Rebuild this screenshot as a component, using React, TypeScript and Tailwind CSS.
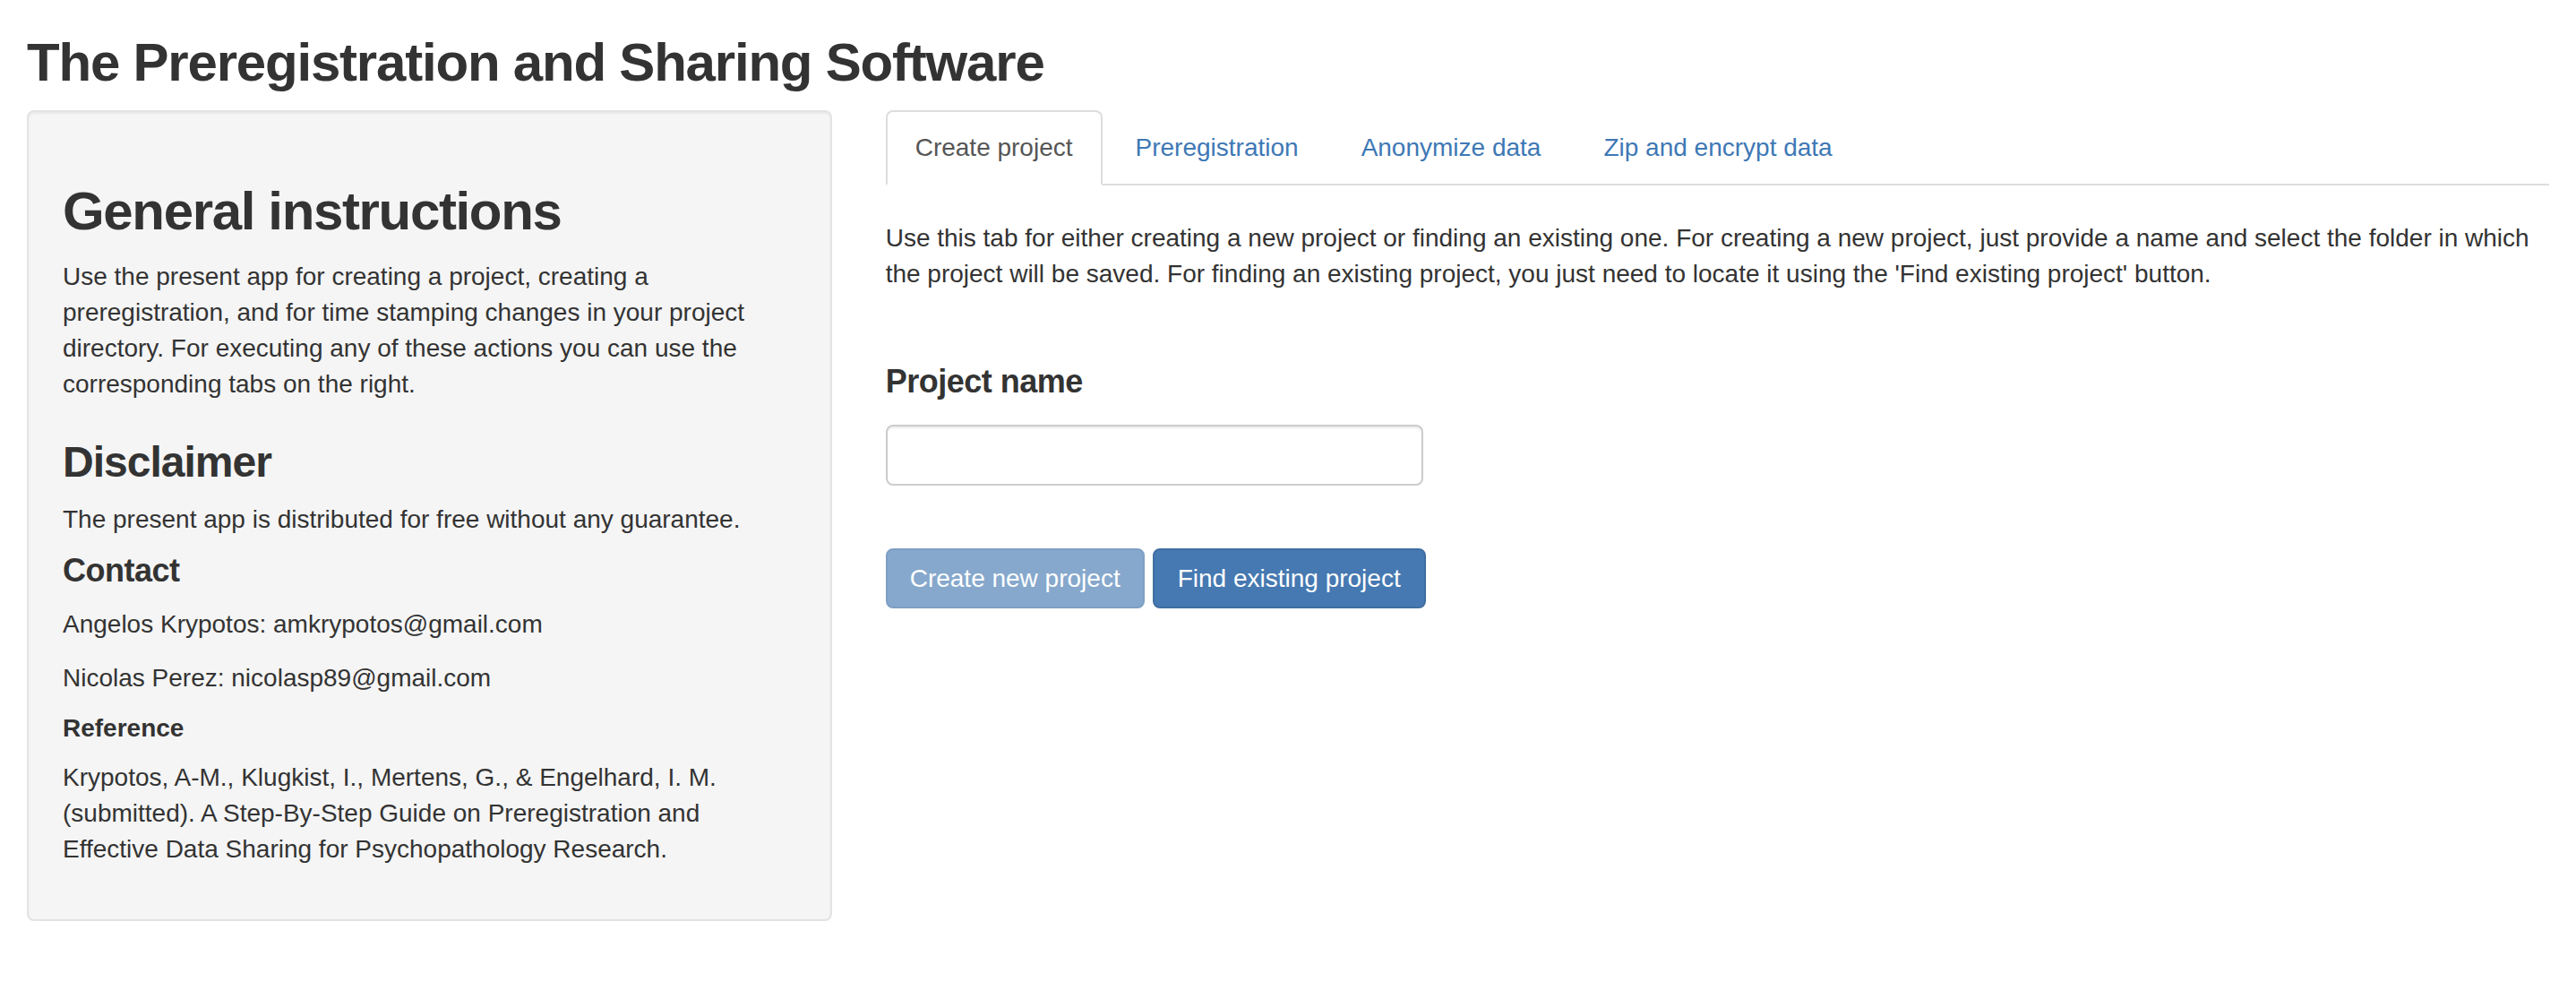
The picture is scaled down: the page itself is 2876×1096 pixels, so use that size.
import { useState } from "react";

const tabs = ["Create project", "Preregistration", "Anonymize data", "Zip and encrypt data"];

const Sidebar = () => (
  <div className="rounded-[8px] border-2 border-[#e3e3e3] bg-[#f5f5f5] px-[38px] pb-[38px] pt-[38px] shadow-[inset_0_2px_2px_rgba(0,0,0,0.05)]">
    <h2 className="mt-[40px] mb-[20px] text-[60px] leading-[66px] font-bold tracking-[-1.35px]">General instructions</h2>
    <p className="mb-[20px]">
      Use the present app for creating a project, creating a preregistration, and for time stamping changes in your
      project directory. For executing any of these actions you can use the corresponding tabs on the right.
    </p>
    <h3 className="mt-[40px] mb-[18px] text-[48px] leading-[53px] font-bold tracking-[-1px]">Disclaimer</h3>
    <p className="mb-[17px]">The present app is distributed for free without any guarantee.</p>
    <h4 className="mt-[17px] mb-[20px] text-[36px] leading-[40px] font-bold tracking-[-0.5px]">Contact</h4>
    <p className="mb-[20px]">Angelos Krypotos: amkrypotos@gmail.com</p>
    <p className="mb-[20px]">Nicolas Perez: nicolasp89@gmail.com</p>
    <h5 className="mt-[20px] mb-[20px] text-[28px] leading-[31px] font-bold">Reference</h5>
    <p className="mb-[20px]">
      Krypotos, A-M., Klugkist, I., Mertens, G., &amp; Engelhard, I. M. (submitted). A Step-By-Step Guide on
      Preregistration and Effective Data Sharing for Psychopathology Research.
    </p>
  </div>
);

const CreateProjectTab = () => {
  const [name, setName] = useState("");
  return (
    <div className="pt-[39px]">
      <p className="mb-[20px]">
        Use this tab for either creating a new project or finding an existing one. For creating a new project, just
        provide a name and select the folder in which the project will be saved. For finding an existing project, you
        just need to locate it using the 'Find existing project' button.
      </p>
      <div className="mt-[80px] mb-[30px]">
        <label className="mb-[28px] block text-[36px] leading-[40px] font-bold tracking-[-0.5px]">Project name</label>
        <input
          type="text"
          value={name}
          onChange={(e) => setName(e.target.value)}
          className="h-[68px] w-[600px] rounded-[8px] border-2 border-[#ccc] bg-white px-[24px] shadow-[inset_0_2px_2px_rgba(0,0,0,0.075)] focus:outline-none"
        />
      </div>
      <div className="mt-[70px] flex gap-[9px]">
        <button
          disabled
          className="h-[67px] rounded-[8px] border-2 border-[#7f9fc4] bg-[#86a8cc] px-[25px] leading-[40px] text-white"
        >
          Create new project
        </button>
        <button className="h-[67px] rounded-[8px] border-2 border-[#3f6ea1] bg-[#4679b1] px-[26px] leading-[40px] text-white">
          Find existing project
        </button>
      </div>
    </div>
  );
};

export default function App() {
  const [active, setActive] = useState(0);
  return (
    <div className="min-h-screen bg-white font-['Liberation_Sans',Arial,sans-serif] text-[28px] leading-[40px] text-[#333]">
      <h2 className="mx-[30px] mt-[37px] mb-[20px] text-[60px] leading-[66px] font-bold tracking-[-1.2px]">
        The Preregistration and Sharing Software
      </h2>
      <div className="grid grid-cols-[1fr_2fr]">
        <div className="px-[30px]">
          <Sidebar />
        </div>
        <div className="px-[30px]">
          <ul className="flex border-b-2 border-[#ddd]">
            {tabs.map((t, i) => (
              <li key={t} className="-mb-[2px] mr-[4px]">
                <button
                  onClick={() => setActive(i)}
                  className={
                    i === active
                      ? "rounded-t-[8px] border-2 border-[#ddd] border-b-transparent bg-white px-[31px] py-[20px] leading-[40px] text-[#555]"
                      : "rounded-t-[8px] border-2 border-transparent px-[31px] py-[20px] leading-[40px] text-[#3e78b5]"
                  }
                >
                  {t}
                </button>
              </li>
            ))}
          </ul>
          {active === 0 ? <CreateProjectTab /> : <div className="pt-[39px]" />}
        </div>
      </div>
    </div>
  );
}
